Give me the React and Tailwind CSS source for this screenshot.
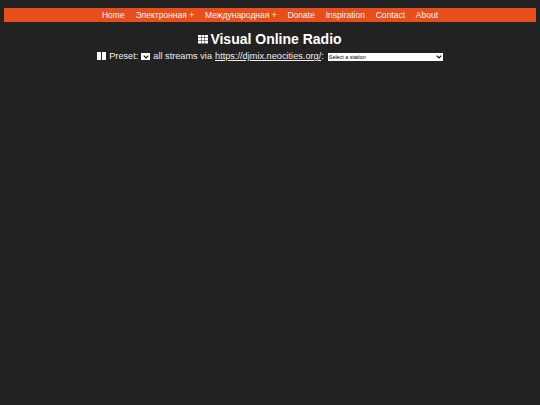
const font = { fontFamily: '"Liberation Sans", Arial, sans-serif' };

const links = ['Home', 'Электронная +', 'Международная +', 'Donate', 'Inspiration', 'Contact', 'About'];

function GridIcon() {
  return (
    <svg width="10" height="9" viewBox="0 0 10 9" fill="#fff" className="shrink-0">
      {[0, 3.5, 7].map((x) =>
        [0, 3, 6].map((y) => <rect key={`${x}-${y}`} x={x} y={y} width="3" height="2.5" />)
      )}
    </svg>
  );
}

function Chevron({ className }) {
  return (
    <svg width="6" height="4" viewBox="0 0 6 4" fill="none" stroke="#111" strokeWidth="1.2" className={className}>
      <path d="M0.7 0.7 L3 3 L5.3 0.7" />
    </svg>
  );
}

export default function App() {
  return (
    <div className="min-h-[405px] bg-[#222222] pt-2 px-1 text-white" style={font}>
      <nav className="h-[14px] bg-[#e84e1b] flex justify-center gap-[10.8px] text-[8.5px] leading-[14px] text-[#f5f5f5]">
        {links.map((l) => (
          <a key={l}>{l}</a>
        ))}
      </nav>
      <h1 className="mt-[8px] flex justify-center items-center gap-[2px] text-[14px] leading-[18px] font-bold">
        <GridIcon />
        <span>Visual Online Radio</span>
      </h1>
      <div className="flex justify-center items-center text-[9.2px] leading-[16px] text-[#eeeeee]">
        <span className="flex gap-[1px] mr-[3px]">
          <span className="w-[4px] h-[8px] bg-white" />
          <span className="w-[4px] h-[8px] bg-white" />
        </span>
        <span>Preset:</span>
        <span className="relative mx-[3px] mt-[1px] flex">
          <select className="w-[9px] h-[7px] bg-white appearance-none border-0 p-0" />
          <Chevron className="absolute left-[1.5px] top-[2px]" />
        </span>
        <span>all streams via</span>
        <a className="ml-[3px] underline">https://djmix.neocities.org/</a>
        <span>:</span>
        <span className="relative ml-[4px] mt-[1px] flex">
          <select className="w-[115px] h-[8px] bg-white text-black text-[5.4px] leading-[8px] appearance-none p-0 pl-[1px] border-0">
            <option>Select a station</option>
          </select>
          <Chevron className="absolute right-[1px] top-[2px]" />
        </span>
      </div>
    </div>
  );
}
